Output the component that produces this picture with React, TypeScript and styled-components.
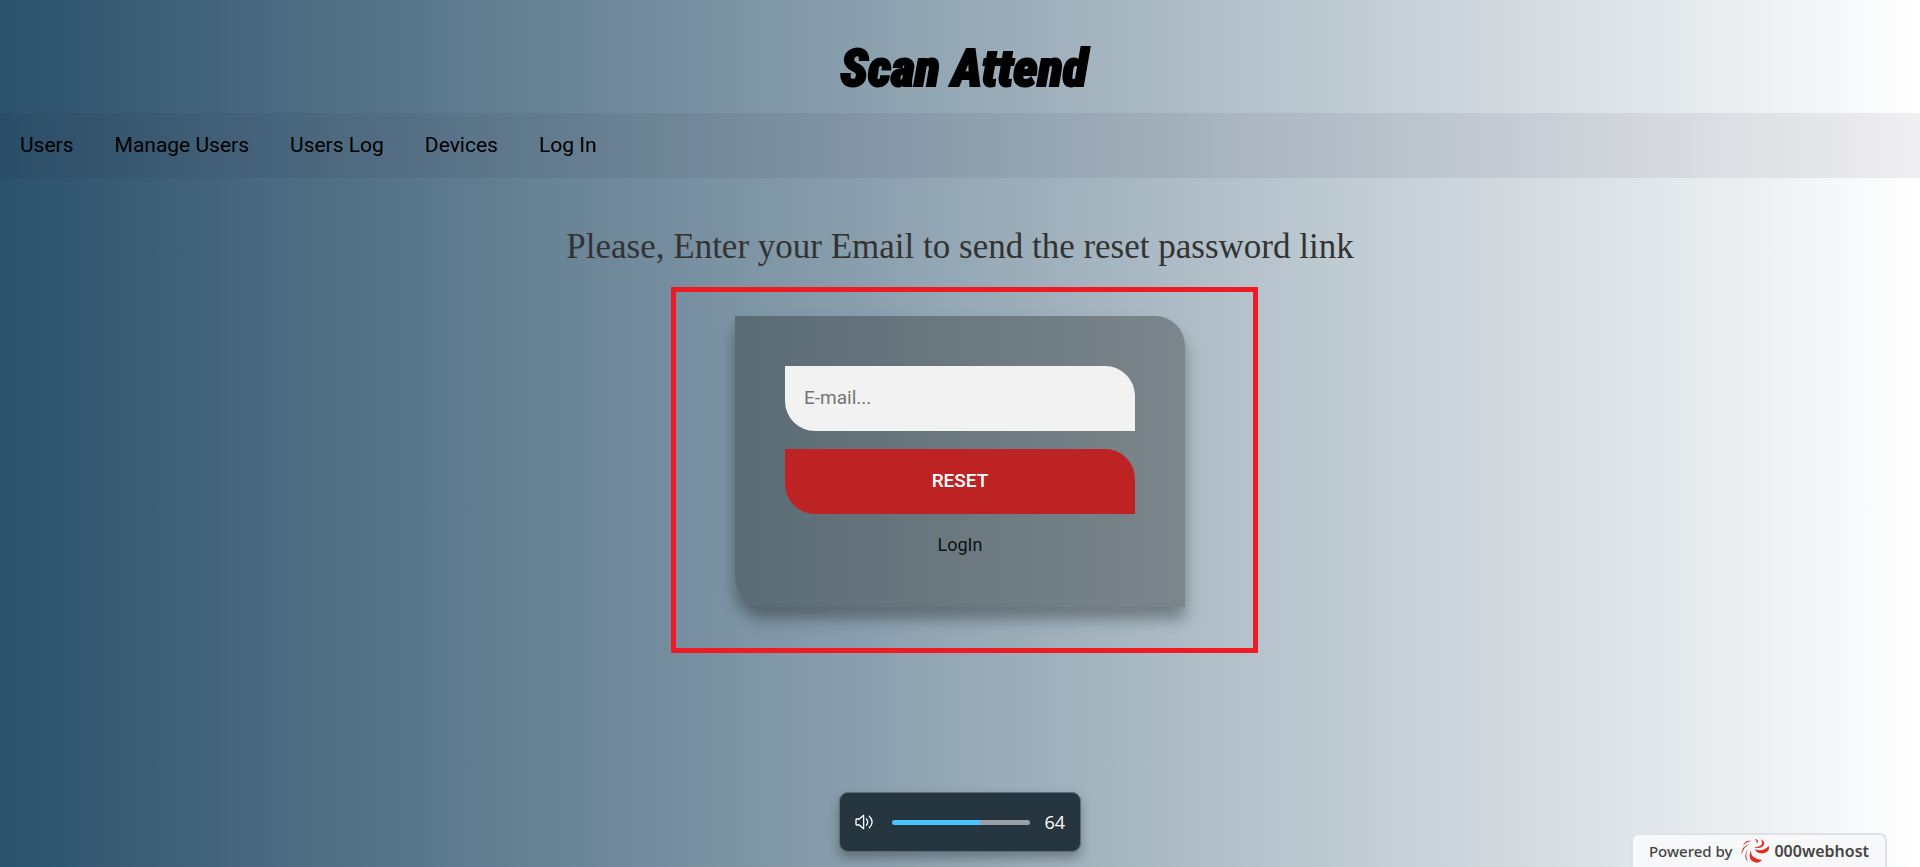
import React, { useState } from "react";
import styled, { createGlobalStyle } from "styled-components";

const GlobalStyle = createGlobalStyle`
  *, *::before, *::after { box-sizing: border-box; }
  html, body, #root { height: 100%; }
  body {
    margin: 0;
    background: linear-gradient(to right, #2b516b, #fff);
    font-family: Roboto, "Liberation Sans", sans-serif;
  }
`;

const Page = styled.div`
  position: relative;
  display: flex;
  flex-direction: column;
  min-height: 100%;
  overflow: hidden;
`;

const Header = styled.header`
  display: flex;
  justify-content: center;
  padding: 37px 0 12px 8px;
`;

const Title = styled.h1`
  margin: 0;
  color: #000;
  font: italic 900 52px/64px Impact, "Roboto Condensed", Roboto, sans-serif;
  -webkit-text-stroke: 2px #000;
`;

const Nav = styled.nav`
  display: flex;
  gap: 1px;
  background: rgba(40, 30, 50, 0.07);
`;

const NavLink = styled.a`
  padding: 20px;
  color: #000;
  font-size: 21px;
  line-height: 25px;
  text-decoration: none;
`;

const Main = styled.main`
  display: flex;
  flex-direction: column;
  align-items: center;
  padding-top: 47px;
`;

const Prompt = styled.h2`
  margin: 0;
  color: #333;
  font: 400 35px/44px "Liberation Serif", "Times New Roman", serif;
  text-align: center;
`;

const Highlight = styled.section`
  display: flex;
  justify-content: center;
  margin: 18px 0 0 9px;
  padding: 24px 68px 41px 59px;
  border: 5px solid #ed1c24;
`;

const Card = styled.form`
  display: flex;
  flex-direction: column;
  gap: 18px;
  width: 450px;
  padding: 50px;
  border-radius: 0 30px 0 30px;
  background: rgba(27, 29, 26, 0.34);
  box-shadow: 0 12px 16px rgba(0, 0, 0, 0.34);
`;

const EmailInput = styled.input`
  height: 65px;
  padding: 0 19px 2px;
  border: 0;
  border-radius: 0 30px 0 30px;
  background: #f2f2f2;
  font: 400 19px Roboto, sans-serif;
  &::placeholder { color: #757575; }
`;

const ResetButton = styled.button`
  height: 65px;
  padding: 0 0 2px;
  border: 0;
  border-radius: 0 30px 0 30px;
  background: #be2323;
  color: #fff;
  font: 500 19px Roboto, sans-serif;
  text-transform: uppercase;
`;

const LoginLink = styled.a`
  align-self: center;
  color: #111;
  font-size: 18px;
  line-height: 25px;
  text-decoration: none;
`;

const VolumePanel = styled.aside`
  position: absolute;
  bottom: 15px;
  left: 50%;
  display: flex;
  align-items: center;
  width: 242px;
  height: 60px;
  margin-left: -121px;
  padding: 0 15px;
  border: 1px solid #5c6d77;
  border-radius: 9px;
  background: #263640;
  color: #fff;
  box-shadow: 0 6px 12px rgba(0, 0, 0, 0.3);
`;

const VolumeSlider = styled.input<{ $level: number }>`
  appearance: none;
  width: 138px;
  height: 5px;
  margin: 0 0 0 18px;
  border-radius: 3px;
  background: linear-gradient(to right, #4cc2ff ${(p) => p.$level}%, #9aa1a5 ${(p) => p.$level}%);
  &::-webkit-slider-thumb { appearance: none; width: 0; height: 0; }
`;

const VolumeValue = styled.output`
  margin-left: auto;
  font: 400 18px "Open Sans", "Noto Sans", sans-serif;
`;

const HostBadge = styled.a`
  position: absolute;
  right: 33px;
  bottom: 0;
  display: flex;
  align-items: center;
  justify-content: center;
  gap: 8px;
  width: 256px;
  height: 34px;
  border: 2px solid #dfe2e5;
  border-bottom: 0;
  border-radius: 7px 7px 0 0;
  background: #f7f8f9;
  color: #444;
  font: 500 15px "Noto Sans", "Open Sans", sans-serif;
  text-decoration: none;
`;

const HostName = styled.span`
  margin-left: -4px;
  font-size: 16px;
  font-weight: 600;
`;

const links = ["Users", "Manage Users", "Users Log", "Devices", "Log In"];

const SpeakerIcon = () => (
  <svg width="19" height="16" viewBox="0 0 19 16" fill="none" stroke="#fff" strokeWidth="1.3" strokeLinecap="round" strokeLinejoin="round" aria-hidden="true">
    <path d="M1.800 5h2.600L8.600 1.300v13.400L4.400 11H1.800Q1 11 1 10.200V5.800Q1 5 1.800 5Z" />
    <path d="M11.400 4.800Q14 8 11.400 11.200M14.300 2.300Q20 8 14.300 13.700" />
  </svg>
);

const HostLogo = () => (
  <svg width="30" height="26" viewBox="0 0 30 26" fill="#e02d1f" aria-hidden="true">
    <path d="M15 1Q18 1 18 4L17 5.500Q17 3 15 1Z" />
    <path d="M21 1Q27 5 22 9Q18 11 14 9Q22 9 22 5Q22 3 21 1Z" />
    <path d="M29 8Q30 15 22 15.500Q16 15 15 11Q22 14.500 29 8Z" />
    <path d="M11 12Q10 21 22 22Q18 27 12 23Q8 19 11 12Z" />
    <path d="M9 10Q4 16 8 24Q2 18 9 10Z" />
    <path d="M10 6Q3 9 1.500 17Q1 8 10 6ZM12 3Q6 3.500 3 8Q5 1.500 12 3Z" />
  </svg>
);

export default function App() {
  const [volume, setVolume] = useState(64);
  return (
    <>
      <GlobalStyle />
      <Page>
        <Header>
          <Title>Scan Attend</Title>
        </Header>
        <Nav>
          {links.map((label) => (
            <NavLink key={label} href="#">{label}</NavLink>
          ))}
        </Nav>
        <Main>
          <Prompt>Please, Enter your Email to send the reset password link</Prompt>
          <Highlight>
            <Card onSubmit={(e) => e.preventDefault()}>
              <EmailInput type="email" placeholder="E-mail..." aria-label="E-mail" />
              <ResetButton type="submit">Reset</ResetButton>
              <LoginLink href="#">LogIn</LoginLink>
            </Card>
          </Highlight>
        </Main>
        <VolumePanel>
          <SpeakerIcon />
          <VolumeSlider
            type="range"
            aria-label="Volume"
            min={0}
            max={100}
            value={volume}
            $level={volume}
            onChange={(e) => setVolume(Number(e.target.value))}
          />
          <VolumeValue>{volume}</VolumeValue>
        </VolumePanel>
        <HostBadge href="#">
          <span>Powered by</span>
          <HostLogo />
          <HostName>000webhost</HostName>
        </HostBadge>
      </Page>
    </>
  );
}
